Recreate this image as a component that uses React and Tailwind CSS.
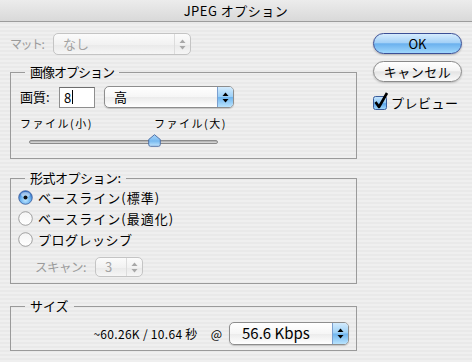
import React from "react";

function Arrows({ color = "#000" }) {
  return (
    <svg width="7" height="11" viewBox="0 0 7 11">
      <path d="M3.5 0.5 L6.5 4 H0.5 Z" fill={color} />
      <path d="M3.5 10.5 L6.5 7 H0.5 Z" fill={color} />
    </svg>
  );
}

function Popup({ w, h, text, disabled, big }) {
  return (
    <div
      className={
        "flex items-stretch rounded-[5px] border overflow-hidden " +
        (disabled
          ? "border-[#c4c4c4] bg-[linear-gradient(to_bottom,#fbfbfb,#f1f1f1_55%,#eaeaea_56%,#f6f6f6)] text-[#a3a3a3] "
          : "border-[#8d8d8d] bg-[linear-gradient(to_bottom,#ffffff,#f6f6f6_50%,#ebebeb_51%,#ffffff)] shadow-[0_1px_1px_rgba(0,0,0,0.18)] text-black ") +
        w +
        " " +
        h
      }
    >
      <span
        className={
          "flex-1 flex items-center " +
          (big ? "pl-[12px] text-[15px]" : "pl-[9px] text-[13px]")
        }
      >
        {text}
      </span>
      {disabled ? (
        <div className="w-[16px] border-l border-[#dcdcdc] flex items-center justify-center">
          <Arrows color="#a8a8a8" />
        </div>
      ) : (
        <div className="w-[16px] border-l border-[#7b9fcf] bg-[linear-gradient(to_bottom,#d3ebfd,#9cd0f7_48%,#6fb5ef_52%,#b9e3fd)] flex items-center justify-center">
          <Arrows />
        </div>
      )}
    </div>
  );
}

function Radio({ checked }) {
  return checked ? (
    <svg width="15" height="15" viewBox="0 0 15 15">
      <defs>
        <radialGradient id="rb" cx="50%" cy="70%" r="60%">
          <stop offset="0%" stopColor="#bfe6ff" />
          <stop offset="60%" stopColor="#6cb3ef" />
          <stop offset="100%" stopColor="#3a76c8" />
        </radialGradient>
      </defs>
      <circle cx="7.5" cy="7.5" r="6.8" fill="url(#rb)" stroke="#3a5c9a" strokeWidth="0.8" />
      <ellipse cx="7.5" cy="4.5" rx="4.5" ry="2.5" fill="#ffffff" opacity="0.45" />
      <circle cx="7.5" cy="7.5" r="2" fill="#111" />
    </svg>
  ) : (
    <svg width="15" height="15" viewBox="0 0 15 15">
      <defs>
        <linearGradient id="rw" x1="0" y1="0" x2="0" y2="1">
          <stop offset="0%" stopColor="#f4f4f4" />
          <stop offset="100%" stopColor="#ffffff" />
        </linearGradient>
      </defs>
      <circle cx="7.5" cy="7.5" r="6.8" fill="url(#rw)" stroke="#8c8c8c" strokeWidth="0.8" />
    </svg>
  );
}

function Checkbox() {
  return (
    <svg width="15" height="15" viewBox="0 0 15 15" className="overflow-visible">
      <defs>
        <linearGradient id="cb" x1="0" y1="0" x2="0" y2="1">
          <stop offset="0%" stopColor="#c9e6fd" />
          <stop offset="50%" stopColor="#8cc6f4" />
          <stop offset="55%" stopColor="#5aa5ea" />
          <stop offset="100%" stopColor="#a8dcfd" />
        </linearGradient>
      </defs>
      <rect x="0.5" y="1.5" width="13" height="13" rx="2" fill="url(#cb)" stroke="#3a5c9a" />
      <path d="M2.5 7 L6 12 L14 -2" fill="none" stroke="#000" strokeWidth="2.6" strokeLinejoin="round" />
    </svg>
  );
}

function Thumb() {
  return (
    <svg width="13" height="13" viewBox="0 0 13 13">
      <defs>
        <linearGradient id="tb" x1="0" y1="0" x2="0" y2="1">
          <stop offset="0%" stopColor="#a9d6fa" />
          <stop offset="55%" stopColor="#77b9f0" />
          <stop offset="100%" stopColor="#c3e6fd" />
        </linearGradient>
      </defs>
      <path d="M6.5 0.7 L12.3 5.5 V10.5 Q12.3 12.3 10.5 12.3 H2.5 Q0.7 12.3 0.7 10.5 V5.5 Z" fill="url(#tb)" stroke="#46679f" strokeWidth="0.9" />
    </svg>
  );
}

export default function App() {
  return (
    <div className="w-[472px] h-[362px] overflow-hidden bg-[repeating-linear-gradient(to_bottom,#efefef_0px,#efefef_2px,#e9e9e9_2px,#e9e9e9_4px)] font-['Noto_Sans_CJK_JP',sans-serif] text-black">
      {/* title bar */}
      <div className="h-[22px] border-b border-[#9c9c9c] bg-[linear-gradient(to_bottom,#ececec,#d9d9d9)] flex items-center justify-center text-[13px] leading-none tracking-[0.5px]">
        JPEG オプション
      </div>

      <div className="flex pl-[10px]">
        {/* left column */}
        <div className="w-[347px] flex flex-col">
          <div className="mt-[11px] h-[22px] flex items-center">
            <span className="w-[43px] text-[12px] tracking-[-1.5px] text-[#9b9b9b]">マット:</span>
            <Popup w="w-[138px]" h="h-[22px]" text="なし" disabled />
          </div>

          <fieldset className="mt-[9px] h-[95px] border border-[#9a9a9a] min-w-0">
            <legend className="ml-[14px] px-[5px] text-[13px] leading-[16px] tracking-[-1px]">画像オプション</legend>
            <div className="mt-[6px] h-[22px] flex items-center pl-[9px]">
              <span className="w-[39px] text-[13px]">画質:</span>
              <div className="w-[36px] h-[21px] border border-[#8e8e8e] border-t-[#6e6e6e] bg-white flex items-center pl-[4px] text-[13px] leading-none">
                8<span className="ml-[1px] w-[1px] h-[14px] bg-black" />
              </div>
              <div className="ml-[9px]">
                <Popup w="w-[130px]" h="h-[22px]" text="高" />
              </div>
            </div>
            <div className="mt-[8px] w-[216px] pl-[9px] flex justify-between text-[11px] leading-[14px] tracking-[1.5px]">
              <span>ファイル(小)</span>
              <span>ファイル(大)</span>
            </div>
            <div className="relative mt-[4px] ml-[18px] w-[189px] h-[14px]">
              <div className="absolute left-0 right-0 top-[6px] h-[4px] rounded-full border border-[#8a8a8a] bg-[linear-gradient(to_bottom,#a8a8a8,#dedede)]" />
              <div className="absolute left-[119px] top-0">
                <Thumb />
              </div>
            </div>
          </fieldset>

          <fieldset className="mt-[11px] h-[114px] border border-[#9a9a9a] min-w-0">
            <legend className="ml-[14px] px-[5px] text-[13px] leading-[16px] tracking-[-0.5px]">形式オプション:</legend>
            <div className="pt-[1px] flex flex-col">
              <div className="h-[21px] flex items-center pl-[7px] gap-[5px] text-[13px] tracking-[1px]">
                <Radio checked />
                <span>ベースライン(標準)</span>
              </div>
              <div className="h-[21px] flex items-center pl-[7px] gap-[5px] text-[13px] tracking-[1px]">
                <Radio />
                <span>ベースライン(最適化)</span>
              </div>
              <div className="h-[21px] flex items-center pl-[7px] gap-[5px] text-[13px] tracking-[0.5px]">
                <Radio />
                <span>プログレッシブ</span>
              </div>
              <div className="mt-[7px] h-[20px] flex items-center pl-[24px]">
                <span className="w-[60px] text-[12.5px] tracking-[-0.5px] text-[#9b9b9b]">スキャン:</span>
                <Popup w="w-[48px]" h="h-[20px]" text="3" disabled />
              </div>
            </div>
          </fieldset>

          <fieldset className="mt-[14px] h-[53px] border border-[#9a9a9a] min-w-0">
            <legend className="ml-[14px] px-[5px] text-[13px] leading-[16px]">サイズ</legend>
            <div className="mt-[8px] flex items-center justify-end pr-[7px]">
              <span className="mr-[13px] text-[12px] tracking-[0.3px]">~60.26K / 10.64 秒</span>
              <span className="mr-[7px] text-[12px]">@</span>
              <Popup w="w-[120px]" h="h-[23px]" text="56.6 Kbps" big />
            </div>
          </fieldset>
        </div>

        {/* right column */}
        <div className="ml-[16px] w-[89px] flex flex-col">
          <div className="mt-[11px] h-[21px] rounded-full border border-[#3b4f96] bg-[linear-gradient(to_bottom,#d6ecfd,#a4d1f7_45%,#6bb1ee_52%,#9fd7fc_100%)] shadow-[0_1px_2px_rgba(0,0,0,0.25)] flex items-center justify-center text-[13px] leading-none">
            OK
          </div>
          <div className="mt-[7px] h-[21px] rounded-full border border-[#8a8a8a] bg-[linear-gradient(to_bottom,#ffffff,#f4f4f4_45%,#e4e4e4_52%,#fafafa_100%)] shadow-[0_1px_2px_rgba(0,0,0,0.2)] flex items-center justify-center text-[13px] leading-none tracking-[0.5px]">
            キャンセル
          </div>
          <div className="mt-[13px] h-[15px] flex items-center gap-[3px]">
            <Checkbox />
            <span className="text-[13px] leading-none tracking-[0.5px]">プレビュー</span>
          </div>
        </div>
      </div>
    </div>
  );
}
